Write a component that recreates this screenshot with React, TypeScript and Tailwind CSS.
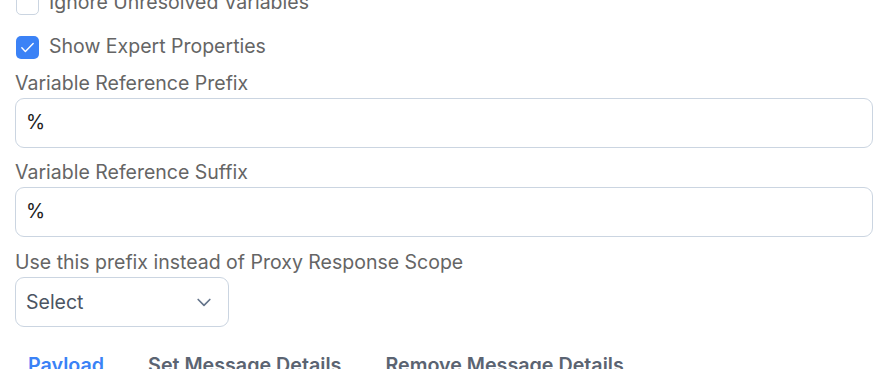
import React from "react";

function Check({ checked }: { checked?: boolean }) {
  return checked ? (
    <span className="flex h-[23px] w-[23px] items-center justify-center rounded-[5px] bg-[#3b82f6]">
      <svg width="17" height="17" viewBox="0 0 24 24" fill="none" stroke="white" strokeWidth="2" strokeLinecap="round" strokeLinejoin="round">
        <path d="M4 12.5l5 5L20 6.5" />
      </svg>
    </span>
  ) : (
    <span className="h-[23px] w-[23px] rounded-[5px] border border-[#cbd5e1] bg-white" />
  );
}

export default function App() {
  const font = { fontFamily: "Inter, 'Noto Sans', sans-serif" };
  return (
    <div className="h-[369px] w-[884px] overflow-hidden bg-white text-[#656565]" style={font}>
      <div className="-mt-[9px] flex flex-col pl-[16px] pr-[11px]">
        <label className="flex h-[24px] items-center gap-[10px] text-[19.5px]">
          <Check />
          <span>Ignore Unresolved Variables</span>
        </label>
        <label className="mt-[20px] flex h-[24px] items-center gap-[10px] text-[19.5px]">
          <Check checked />
          <span>Show Expert Properties</span>
        </label>
      </div>
      <div className="flex flex-col pl-[15px] pr-[11px]">
        <div className="mt-[12px] h-[24px] text-[19.5px] leading-[24px]">Variable Reference Prefix</div>
        <div className="mt-[3px] flex h-[50px] items-center rounded-[9px] border border-[#cbd5e1] pl-[10px] pr-[11px] text-[19.5px] text-[#222]">%</div>
        <div className="mt-[12px] h-[24px] text-[19.5px] leading-[24px]">Variable Reference Suffix</div>
        <div className="mt-[3px] flex h-[50px] items-center rounded-[9px] border border-[#cbd5e1] pl-[10px] pr-[11px] text-[19.5px] text-[#222]">%</div>
        <div className="mt-[13px] h-[24px] text-[19.5px] leading-[24px]">Use this prefix instead of Proxy Response Scope</div>
        <div className="mt-[3px] flex h-[50px] w-[214px] items-center justify-between rounded-[9px] border border-[#cbd5e1] pl-[10px] pr-[14px] text-[19.5px] text-[#4b5563]">
          <span className="pt-[1px]">Select</span>
          <svg width="20" height="20" viewBox="0 0 24 24" fill="none" stroke="#64748b" strokeWidth="2" strokeLinecap="round" strokeLinejoin="round">
            <path d="M5 9l7 7 7-7" />
          </svg>
        </div>
        <div className="mt-[24px] flex gap-[44px] pl-[13px] text-[19.7px] font-semibold text-[#5b6472]">
          <span className="text-[#3b82f6]">Payload</span>
          <span>Set Message Details</span>
          <span>Remove Message Details</span>
        </div>
      </div>
    </div>
  );
}
